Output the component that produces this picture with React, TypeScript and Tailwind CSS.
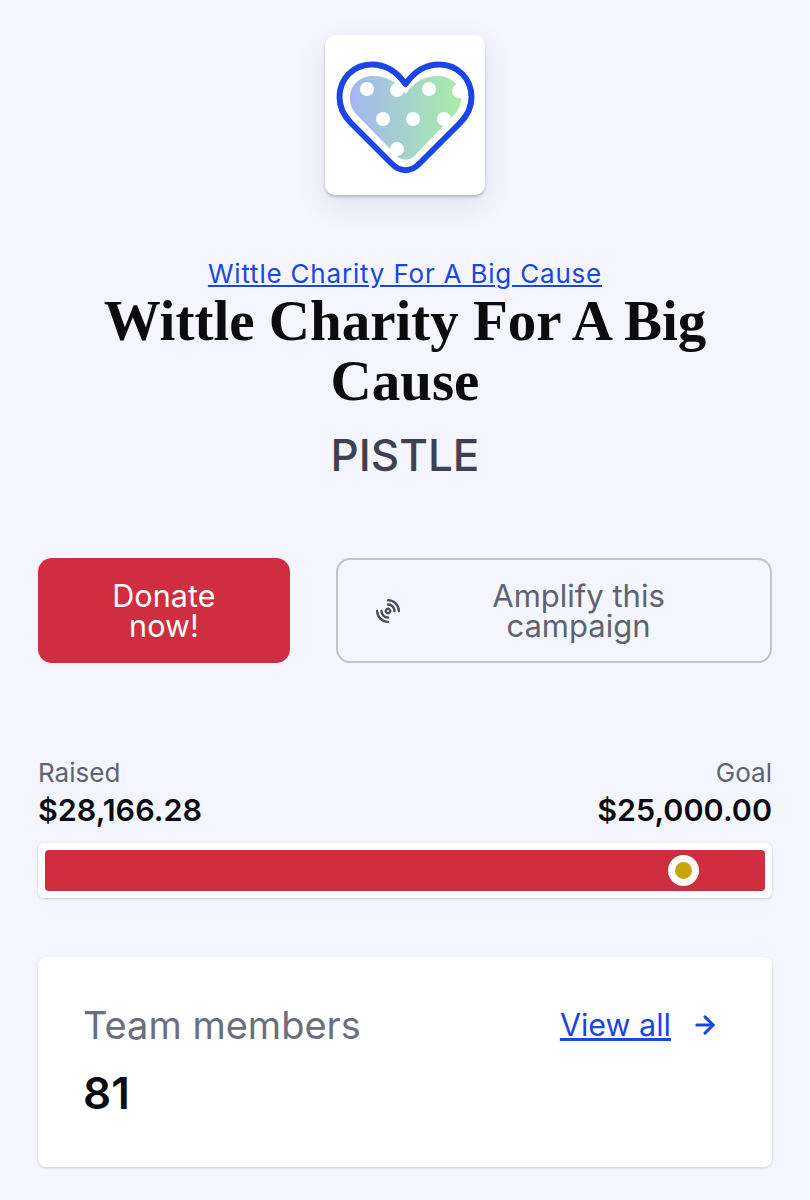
import React from 'react';
import { ArrowRight, Radio } from 'lucide-react';

function HeartLogo() {
  const outline =
    'M80.5 49C72 37 60 29.5 47 29.5C28 29.5 14.5 44 14.5 62C14.5 73 19 81 26 88L66 128C75 137.5 86 137.5 95 128L135 88C142 81 146.5 73 146.5 62C146.5 44 133 29.5 114 29.5C101 29.5 89 37 80.5 49Z';
  const inner =
    'M80.5 59C72 47 62 41 48 41C34 41 25 51 25 63C25 71 28 76 33 81L68 117C75 127 86 127 93 117L128 81C133 76 136 71 136 63C136 51 127 41 113 41C99 41 89 47 80.5 59Z';
  const dots = [
    [42, 54],
    [72, 55],
    [104, 54],
    [134, 56],
    [58, 84],
    [88, 84],
    [119, 84],
    [72, 114],
  ];
  return (
    <svg width="160" height="160" viewBox="0 0 160 160" fill="none">
      <defs>
        <linearGradient id="heartFill" x1="25" y1="0" x2="136" y2="0" gradientUnits="userSpaceOnUse">
          <stop offset="0" stopColor="#a3b6f3" />
          <stop offset="1" stopColor="#a8eea6" />
        </linearGradient>
      </defs>
      <path d={inner} fill="url(#heartFill)" />
      {dots.map(([x, y]) => (
        <circle key={`${x}-${y}`} cx={x} cy={y} r="7" fill="#fff" />
      ))}
      <path d={outline} stroke="#1a46e5" strokeWidth="6" strokeLinejoin="round" />
    </svg>
  );
}

export default function App() {
  return (
    <div className="w-[810px] h-[1200px] overflow-hidden bg-[#f4f5fe] px-[38px] font-['Inter',sans-serif]">
      <div className="flex flex-col items-center pt-[35px]">
        <div className="w-40 h-40 bg-white rounded-[10px] shadow-[0_2px_3px_rgba(40,40,70,0.25),0_10px_30px_rgba(60,60,120,0.1)]">
          <HeartLogo />
        </div>
        <a href="#" className="mt-[62px] text-[26px] leading-[34px] tracking-[0.8px] text-[#1a46e5] underline">
          Wittle Charity For A Big Cause
        </a>
        <h1 className="w-[640px] text-center font-['Liberation_Serif',serif] font-bold text-[57px] leading-[60px] text-[#0c0c10]">
          Wittle Charity For A Big Cause
        </h1>
        <p className="mt-[16px] text-[44px] leading-[56px] font-[450] text-[#3f4150]">PISTLE</p>
      </div>

      <div className="flex gap-[46px] mt-[75px]">
        <button className="w-[252px] h-[105px] rounded-[14px] bg-[#cf2e41] text-white text-[30.5px] leading-[30px] tracking-[0.1px] px-10">
          Donate now!
        </button>
        <button className="flex-1 h-[105px] rounded-[14px] border-2 border-[#c2c4ce] flex items-center pl-[37px] pr-[46px] text-[#5f6270] text-[31px] leading-[30px]">
          <Radio size={26} strokeWidth={2.2} className="-rotate-45 shrink-0 text-[#4b4f5c]" />
          <span className="flex-1 text-center pl-[32px]">Amplify this campaign</span>
        </button>
      </div>

      <div className="flex justify-between mt-[92px]">
        <div>
          <div className="text-[26px] leading-[36px] text-[#5f6270]">Raised</div>
          <div className="text-[30.5px] leading-[38px] font-semibold text-[#0c0c10]">$28,166.28</div>
        </div>
        <div className="text-right">
          <div className="text-[26px] leading-[36px] text-[#5f6270]">Goal</div>
          <div className="text-[30.5px] leading-[38px] font-semibold text-[#0c0c10]">$25,000.00</div>
        </div>
      </div>

      <div className="mt-[14px] bg-white rounded-md p-[7px] shadow-[0_1px_3px_rgba(40,40,70,0.2)]">
        <div className="relative h-[41px] rounded-[4px] bg-[#cf2e41]">
          <div className="absolute left-[623px] top-[5px] w-[31px] h-[31px] rounded-full bg-[#c9a50a] border-[7px] border-white" />
        </div>
      </div>

      <div className="mt-[59px] h-[210px] bg-white rounded-lg pl-[45px] pr-[46px] pt-[44px] shadow-[0_1px_3px_rgba(40,40,70,0.2)]">
        <div className="flex justify-between items-center">
          <div className="text-[38px] leading-[48px] text-[#6b6e7c]">Team members</div>
          <div className="flex items-center gap-[20px] pr-[7px]">
            <a href="#" className="text-[30.5px] leading-[40px] text-[#1a46e5] underline">View all</a>
            <ArrowRight size={28} strokeWidth={2.6} className="text-[#1a46e5]" />
          </div>
        </div>
        <div className="mt-[16px] text-[44px] leading-[56px] font-semibold text-[#0c0c10]">81</div>
      </div>
    </div>
  );
}
